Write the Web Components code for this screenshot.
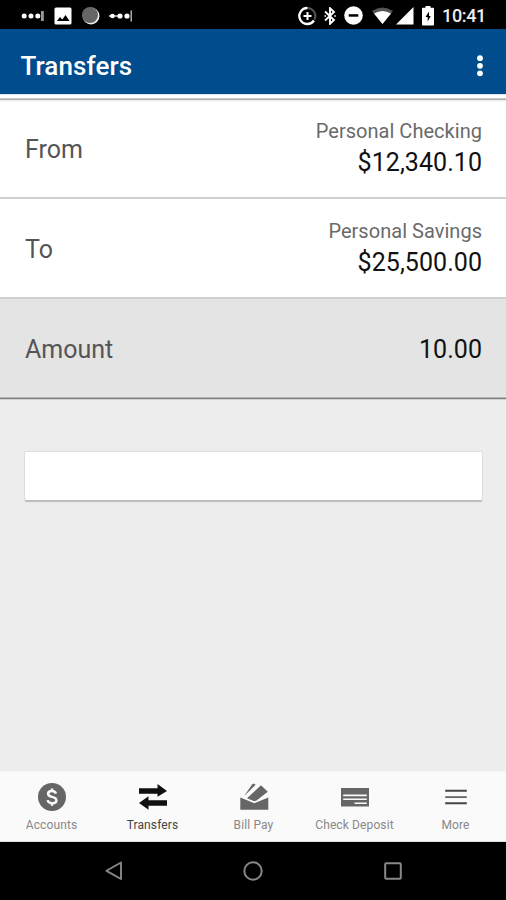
<!DOCTYPE html>
<html lang="en">
<head>
<meta charset="utf-8">
<title>Transfers</title>
<style>
body { margin: 0; background: #000; font-family: Roboto, "Liberation Sans", sans-serif; }
</style>
</head>
<body>
<transfer-app></transfer-app>
<script>
const ICONS = {
  dots: [24, 12, '<g fill="#fff"><circle cx="3.2" cy="6" r="2.5"/><circle cx="10" cy="6" r="2.5"/><circle cx="16.8" cy="6" r="2.5"/><path fill="#999" d="M20 1h2.8v10h-2.8z"/></g>'],
  dotsLinked: [24, 12, '<g fill="#fff"><circle cx="3.5" cy="6" r="2.3"/><circle cx="11" cy="6" r="2.6"/><circle cx="18" cy="6" r="2.6"/><path d="M0 5.4h10v1.2H0z"/><path fill="#aaa" d="M21.5 .5h1.5v11H21.5z"/></g>'],
  image: [18, 18, '<rect x=".5" y=".5" width="17" height="17" rx="1.5" fill="#fff"/><path fill="#000" d="M3 14l3-4 2.3 2.5L11.5 8l4 6z"/>'],
  moon: [18, 18, '<circle cx="9" cy="9" r="8.5" fill="#eee"/><circle cx="8" cy="8" r="8" fill="#666"/>'],
  data: [19, 20, '<g fill="none" stroke="#fff" stroke-width="2"><path stroke="#555" d="M9.5 2a8 8 0 0 1 7 11.5"/><path stroke-width="2.3" d="M9.5 2a8 8 0 1 0 6.5 12.5"/><path d="M9.5 6v8M5.5 10h8"/></g>'],
  bluetooth: [12, 18, '<path d="M1 4.5l9 8.5-4 3.8V1.2L10 5l-9 8.5" fill="none" stroke="#fff" stroke-width="1.9"/><circle cx="1.2" cy="9" r="1" fill="#ccc"/><circle cx="11" cy="9" r="1" fill="#ccc"/>'],
  dnd: [19, 19, '<circle cx="9.5" cy="9.5" r="9.3" fill="#fff"/><path fill="#000" d="M4.7 8.2h9.6v2.5H4.7z"/>'],
  wifi: [21, 17, '<path fill="#555" d="M0 4Q10.5-3 21 4L10.5 17z"/><path fill="#fff" d="M2 6.5Q10.5 1.5 19 6.5L10.5 17z"/>'],
  signal: [18, 18, '<path fill="#fff" d="M17.5 0v17.5H0z"/>'],
  battery: [12, 20, '<path fill="#fff" d="M3.5 0h5v1.8H11a1 1 0 0 1 1 1V18.5a1 1 0 0 1-1 1H1a1 1 0 0 1-1-1V2.8a1 1 0 0 1 1-1h2.5z"/><path fill="#000" d="M7 5.5L3.5 11h2.2v4.5L8.7 9.9H7z"/>'],
  overflow: [8, 24, '<g fill="#fff"><circle cx="4" cy="4.2" r="2.9"/><circle cx="4" cy="11.8" r="2.9"/><circle cx="4" cy="19.3" r="2.9"/></g>'],
  accounts: [30, 30, '<circle cx="15" cy="15" r="14" fill="#666"/><path d="M18.9 11.6Q18.3 9 15 9Q11.1 9 11.1 11.8Q11.1 14 15 14.9Q19.4 15.9 19.4 18.4Q19.4 21.2 15.2 21.2Q11.1 21.2 10.7 18.2M15 6.5v2.5M15 21.2v2.5" fill="none" stroke="#fafafa" stroke-width="2.5"/>'],
  transfers: [30, 30, '<path fill="#101010" d="M1 6.2h18.5V2l9.5 7-9.5 5.7v-3H1zM29 18.2H10.5v-4L1 21.1l9.5 6.7v-4H29z"/>'],
  billpay: [30, 30, '<g fill="#666"><path d="M1.3 15.5L15.3 21.2l14-5.7v12.3h-28z"/><path d="M8 16.3L22 3.2l6.8 6.6-11.300 8.600-2.200.800q-3.500-1.500-7.300-2.900z"/><path d="M13 2.600l1.600-1.200 2 1.400L5 14.300z"/></g>'],
  check: [30, 30, '<rect x="1" y="6" width="28" height="18.5" fill="#666"/><path fill="#fafafa" d="M3.200 12.500h23.600v1.800H3.200zM3.200 16.500h23.600v1.400H3.200zM14.500 20.500h12.300v1.500H14.500z"/>'],
  more: [30, 30, '<g fill="#444"><path d="M4.2 7.7h21.6v2H4.2zM4.2 20.3h21.6v2H4.2z"/><path fill="#666" d="M4.2 14.2h21.6v1.8H4.2z"/></g>'],
  back: [20, 22, '<path d="M17 2.5v16.5L2.5 10.8z" fill="none" stroke="#888" stroke-width="1.9" stroke-linejoin="round"/>'],
  home: [22, 22, '<circle cx="11" cy="11" r="8.7" fill="none" stroke="#888" stroke-width="2"/>'],
  recent: [20, 20, '<rect x="2.2" y="2.2" width="15.6" height="15.6" rx="1" fill="none" stroke="#888" stroke-width="2"/>']
};

class BaseElement extends HTMLElement {
  connectedCallback() {
    if (this.shadowRoot) return;
    this.attachShadow({ mode: 'open' }).innerHTML = this.render();
  }
}

customElements.define('ui-icon', class extends BaseElement {
  render() {
    const [w, h, body] = ICONS[this.getAttribute('name')];
    return `<style>:host{display:block;flex:none}svg{display:block}</style>
      <svg width="${w}" height="${h}" viewBox="0 0 ${w} ${h}" aria-hidden="true">${body}</svg>`;
  }
});

customElements.define('status-bar', class extends BaseElement {
  render() {
    return `<style>
      :host{display:flex;align-items:center;justify-content:space-between;height:29px;padding:2px 20px 0 21px;box-sizing:border-box;background:#000;color:#eee}
      div{display:flex;align-items:center}
      .left{gap:8.5px}.left ui-icon:nth-child(3){margin-left:2px}
      .right{gap:8px}
      .data{margin-right:-1px}.dnd{margin-right:1px}.wifi{margin-right:-5px}
      time{font-size:18px;line-height:20px;font-weight:500;letter-spacing:-.35px}
    </style>
    <div class="left"><ui-icon name="dots"></ui-icon><ui-icon name="image"></ui-icon><ui-icon name="moon"></ui-icon><ui-icon name="dotsLinked"></ui-icon></div>
    <div class="right"><ui-icon class="data" name="data"></ui-icon><ui-icon name="bluetooth"></ui-icon><ui-icon class="dnd" name="dnd"></ui-icon><ui-icon class="wifi" name="wifi"></ui-icon><ui-icon name="signal"></ui-icon><ui-icon name="battery"></ui-icon><time>10:41</time></div>`;
  }
});

customElements.define('app-bar', class extends BaseElement {
  render() {
    return `<style>
      :host{display:flex;align-items:center;justify-content:space-between;height:65px;padding:9px 22px 0 20.5px;box-sizing:border-box;background:#004c8c;color:#fff}
      h1{margin:0;font-size:26px;line-height:30px;font-weight:500;letter-spacing:.1px}
    </style><h1><slot></slot></h1><ui-icon name="overflow"></ui-icon>`;
  }
});

customElements.define('transfer-row', class extends BaseElement {
  render() {
    return `<style>
      :host{display:flex;align-items:center;justify-content:space-between;height:100px;box-sizing:border-box;padding:0 24px 0 25px;border-bottom:2px solid #cfcfcf;background:#fff}
      :host([active]){background:#e4e4e4;border-bottom:0;padding-top:4px}
      .label{font-size:25px;line-height:30px;color:#555;padding-top:3px}
      :host([active]) .label{padding-top:0}
      .value{display:flex;flex-direction:column;align-items:flex-end;text-align:right}
      .amount{font-size:25px;line-height:32px;color:#111;letter-spacing:.05px}
      ::slotted([slot=account]){font-size:20px;line-height:32px;margin-top:-2px;color:#6a6a6a;letter-spacing:.03px}
    </style>
    <span class="label">${this.getAttribute('label')}</span>
    <div class="value"><slot name="account"></slot><span class="amount"><slot></slot></span></div>`;
  }
});

customElements.define('note-field', class extends BaseElement {
  render() {
    return `<style>
      :host{display:block;margin:52px 24px 0 25px}
      input{display:block;width:100%;height:48px;box-sizing:border-box;border:0;border-radius:1px;outline:0;background:#fff;font:inherit;box-shadow:0 2px 1px #bcbcbc,0 0 0 1px #dedede}
    </style><input type="text" aria-label="Memo">`;
  }
});

customElements.define('tab-item', class extends BaseElement {
  render() {
    return `<style>
      :host{display:flex;flex-direction:column;align-items:center;flex:1;padding-top:10px;color:#888;font-size:12px;line-height:16px;letter-spacing:.12px;white-space:nowrap}
      :host([selected]){color:#444}
      span{margin-top:5px}
    </style><ui-icon name="${this.getAttribute('icon')}"></ui-icon><span><slot></slot></span>`;
  }
});

customElements.define('tab-bar', class extends BaseElement {
  render() {
    return `<style>:host{display:flex;height:70px;box-sizing:border-box;padding-left:1px;background:#fafafa;border-bottom:1px solid #ddd;box-shadow:0 -1px 1px #f4f4f4}</style><slot></slot>`;
  }
});

customElements.define('system-nav', class extends BaseElement {
  render() {
    return `<style>
      :host{display:grid;grid-template-columns:22px 22px 22px;justify-content:center;justify-items:center;align-items:center;column-gap:117.5px;height:58px;background:#000}
    </style><ui-icon name="back"></ui-icon><ui-icon name="home"></ui-icon><ui-icon name="recent"></ui-icon>`;
  }
});

customElements.define('transfer-app', class extends BaseElement {
  render() {
    return `<style>
      :host{display:flex;flex-direction:column;width:506px;height:900px;overflow:hidden;background:#ededed}
      status-bar,app-bar,tab-bar,system-nav{flex:none}
      main{flex:1}
      .rule{height:8px;margin-bottom:-3px;position:relative;background:linear-gradient(#dfe6ee 0 1px,#fff 1px 4px,#c4c4c4 4px 5px,#b0b0b0 5px 6px,#eee 6px 7px,#f8f8f8 7px 8px)}
      .edge{height:3px;background:linear-gradient(#b5b5b5 0 1px,#808080 1px 2px,#d0d0d0 2px 3px)}
      .rows transfer-row:nth-child(3){height:98px}
    </style>
    <status-bar></status-bar>
    <app-bar>Transfers</app-bar>
    <main>
      <div class="rule"></div>
      <div class="rows">
        <transfer-row label="From"><span slot="account">Personal Checking</span>$12,340.10</transfer-row>
        <transfer-row label="To"><span slot="account">Personal Savings</span>$25,500.00</transfer-row>
        <transfer-row label="Amount" active>10.00</transfer-row>
        <div class="edge"></div>
      </div>
      <note-field></note-field>
    </main>
    <tab-bar>
      <tab-item icon="accounts">Accounts</tab-item>
      <tab-item icon="transfers" selected>Transfers</tab-item>
      <tab-item icon="billpay">Bill Pay</tab-item>
      <tab-item icon="check">Check Deposit</tab-item>
      <tab-item icon="more">More</tab-item>
    </tab-bar>
    <system-nav></system-nav>`;
  }
});
</script>
</body>
</html>
